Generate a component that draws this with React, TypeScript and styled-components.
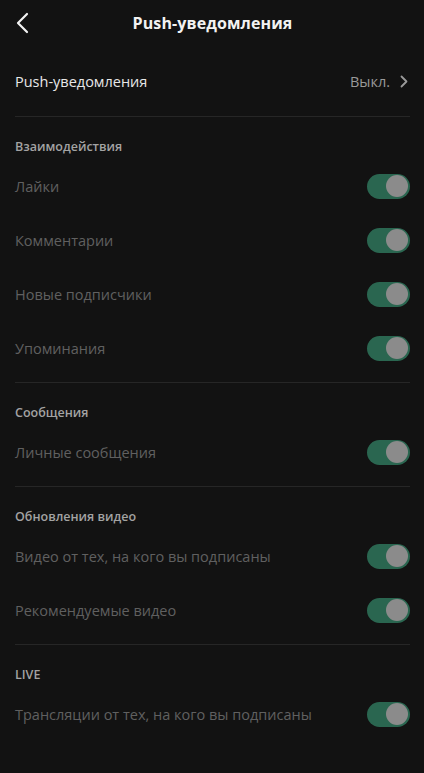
import styled, { createGlobalStyle } from "styled-components";

const GlobalStyle = createGlobalStyle`
  html, body {
    margin: 0;
    padding: 0;
    background: #121212;
  }
  body {
    font-family: "Open Sans", "Liberation Sans", sans-serif;
  }
`;

interface Section {
  title: string;
  items: string[];
}

const sections: Section[] = [
  {
    title: "Взаимодействия",
    items: ["Лайки", "Комментарии", "Новые подписчики", "Упоминания"],
  },
  { title: "Сообщения", items: ["Личные сообщения"] },
  {
    title: "Обновления видео",
    items: ["Видео от тех, на кого вы подписаны", "Рекомендуемые видео"],
  },
  { title: "LIVE", items: ["Трансляции от тех, на кого вы подписаны"] },
];

const App = () => {
  return (
    <>
      <GlobalStyle />
      <Screen>
        <Header>
          <BackButton>
            <svg width="14" height="22" viewBox="0 0 14 22" fill="none">
              <path d="M12 2L3 11l9 9" stroke="#f2f2f2" strokeWidth="2.2" strokeLinecap="round" strokeLinejoin="round" />
            </svg>
          </BackButton>
          <Title>Push-уведомления</Title>
        </Header>

        <MainRow>
          <MainLabel>Push-уведомления</MainLabel>
          <Value>
            Выкл.
            <svg width="8" height="13" viewBox="0 0 8 13" fill="none">
              <path d="M1.5 1.5l5 5-5 5" stroke="#9a9a9a" strokeWidth="1.8" strokeLinecap="round" strokeLinejoin="round" />
            </svg>
          </Value>
        </MainRow>

        {sections.map((s) => (
          <Group key={s.title}>
            <GroupTitle>{s.title}</GroupTitle>
            {s.items.map((item) => (
              <Row key={item}>
                <RowLabel>{item}</RowLabel>
                <Toggle>
                  <Knob />
                </Toggle>
              </Row>
            ))}
          </Group>
        ))}
      </Screen>
    </>
  );
};

export default App;

const Screen = styled.div`
  width: 424px;
  min-height: 773px;
  background: #121212;
  display: flex;
  flex-direction: column;
  padding: 0 14px 0 15px;
  box-sizing: border-box;
`;

const Header = styled.header`
  height: 45px;
  position: relative;
  display: flex;
  align-items: center;
  justify-content: center;
`;

const BackButton = styled.div`
  position: absolute;
  left: 0;
  top: 12px;
  display: flex;
`;

const Title = styled.h1`
  margin: 0;
  font-size: 16px;
  font-weight: 700;
  color: #f2f2f2;
  letter-spacing: 0.1px;
`;

const MainRow = styled.div`
  height: 71px;
  display: flex;
  align-items: center;
  justify-content: space-between;
  border-bottom: 1px solid #262626;
`;

const MainLabel = styled.span`
  font-size: 14.5px;
  color: #e8e8e8;
  margin-top: 1px;
`;

const Value = styled.span`
  display: flex;
  align-items: center;
  gap: 10px;
  font-size: 14.5px;
  color: #9a9a9a;
  padding-right: 2px;
  margin-top: 1px;
`;

const Group = styled.section`
  display: flex;
  flex-direction: column;
  padding-top: 18px;
  padding-bottom: 7px;
  border-bottom: 1px solid #262626;

  &:last-child {
    border-bottom: none;
  }
`;

const GroupTitle = styled.h2`
  margin: 0;
  font-size: 12.5px;
  font-weight: 600;
  color: #a3a3a3;
  line-height: 24px;
`;

const Row = styled.div`
  height: 54px;
  display: flex;
  align-items: center;
  justify-content: space-between;
`;

const RowLabel = styled.span`
  font-size: 14.5px;
  color: #606060;
`;

const Toggle = styled.div`
  width: 43px;
  height: 25px;
  border-radius: 13px;
  background: #2a6650;
  display: flex;
  align-items: center;
  justify-content: flex-end;
  padding: 0 2px;
  box-sizing: border-box;
`;

const Knob = styled.div`
  width: 22px;
  height: 22px;
  border-radius: 50%;
  background: #8b8b8b;
`;
